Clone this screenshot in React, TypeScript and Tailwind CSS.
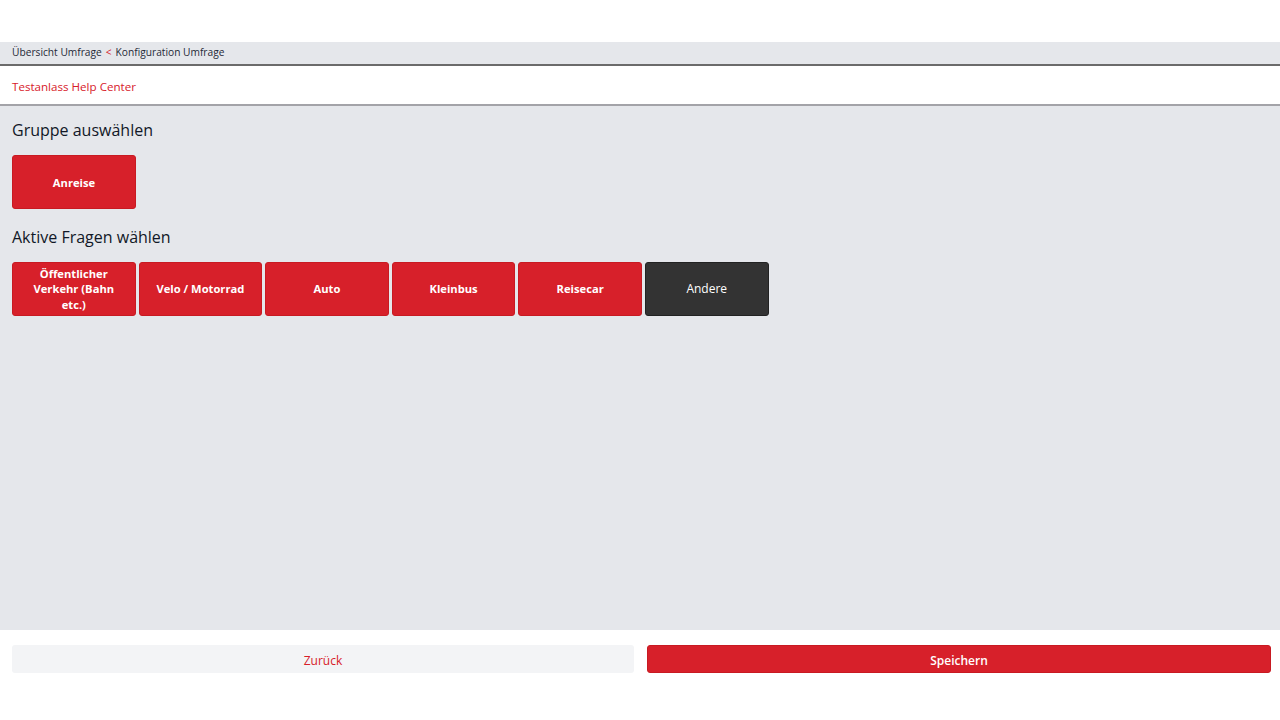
import React, { useState } from "react";

const questions = [
  { id: "oev", label: "Öffentlicher Verkehr (Bahn etc.)", active: true },
  { id: "velo", label: "Velo / Motorrad", active: true },
  { id: "auto", label: "Auto", active: true },
  { id: "kleinbus", label: "Kleinbus", active: true },
  { id: "reisecar", label: "Reisecar", active: true },
  { id: "andere", label: "Andere", active: false },
];

export default function App() {
  const [items, setItems] = useState(questions);

  // Frage ein-/ausschalten
  const toggle = (id: string) => {
    setItems(prev => prev.map(q => (q.id === id ? { ...q, active: !q.active } : q)));
  };

  return (
    <div
      className="w-full h-[720px] flex flex-col bg-white text-[#1f2937]"
      style={{ fontFamily: '"Open Sans", "Noto Sans", sans-serif' }}
    >
      <div className="h-[42px] shrink-0 bg-white" />

      {/* Breadcrumb */}
      <div className="h-[24px] shrink-0 flex items-center px-3 bg-[#e5e7eb] border-b-2 border-[#6b6b6b] text-[10.2px] text-[#1f2937]">
        <span>Übersicht Umfrage</span>
        <span className="mx-1 text-[#d7202a]">&lt;</span>
        <span>Konfiguration Umfrage</span>
      </div>

      <div className="h-[40px] shrink-0 flex items-center px-3 pt-[3px] bg-white border-b-2 border-[#a3a3a8]">
        <span className="text-[11.6px] text-[#d7202a]">Testanlass Help Center</span>
      </div>

      {/* Inhalt */}
      <div className="flex-1 bg-[#e5e7eb] px-3 pt-[12px]">
        <h2 className="text-[16px] leading-[24px] text-[#111827]">Gruppe auswählen</h2>
        <div className="mt-[13px] flex">
          <button className="w-[124px] h-[54px] pt-[3px] rounded-[3px] border border-[#c81a22] bg-[#d7202a] text-white text-[11.2px] font-bold">
            Anreise
          </button>
        </div>

        <h2 className="mt-[16px] text-[16px] leading-[24px] text-[#111827]">Aktive Fragen wählen</h2>
        <div className="mt-[13px] flex gap-[3px]">
          {items.map(q => (
            <button
              key={q.id}
              onClick={() => toggle(q.id)}
              className={
                q.active
                  ? "w-[123.6px] h-[54px] px-3 rounded-[3px] border border-[#c81a22] bg-[#d7202a] text-white text-[11.2px] leading-[15.5px] font-bold"
                  : "w-[123.6px] h-[54px] px-3 rounded-[3px] border border-[#222] bg-[#333333] text-white text-[12px] leading-[15.5px]"
              }
            >
              {q.label}
            </button>
          ))}
        </div>
      </div>

      {/* Footer */}
      <div className="h-[90px] shrink-0 bg-white flex gap-[13px] pl-3 pr-[9px] pt-[15px]">
        <button className="flex-1 h-[28px] pt-[3px] rounded-[3px] bg-[#f3f4f6] text-[#d7202a] text-[12px]">Zurück</button>
        <button className="flex-1 h-[28px] pt-[3px] rounded-[3px] border border-[#c81a22] bg-[#d7202a] text-white text-[12px] font-semibold">
          Speichern
        </button>
      </div>
    </div>
  );
}
